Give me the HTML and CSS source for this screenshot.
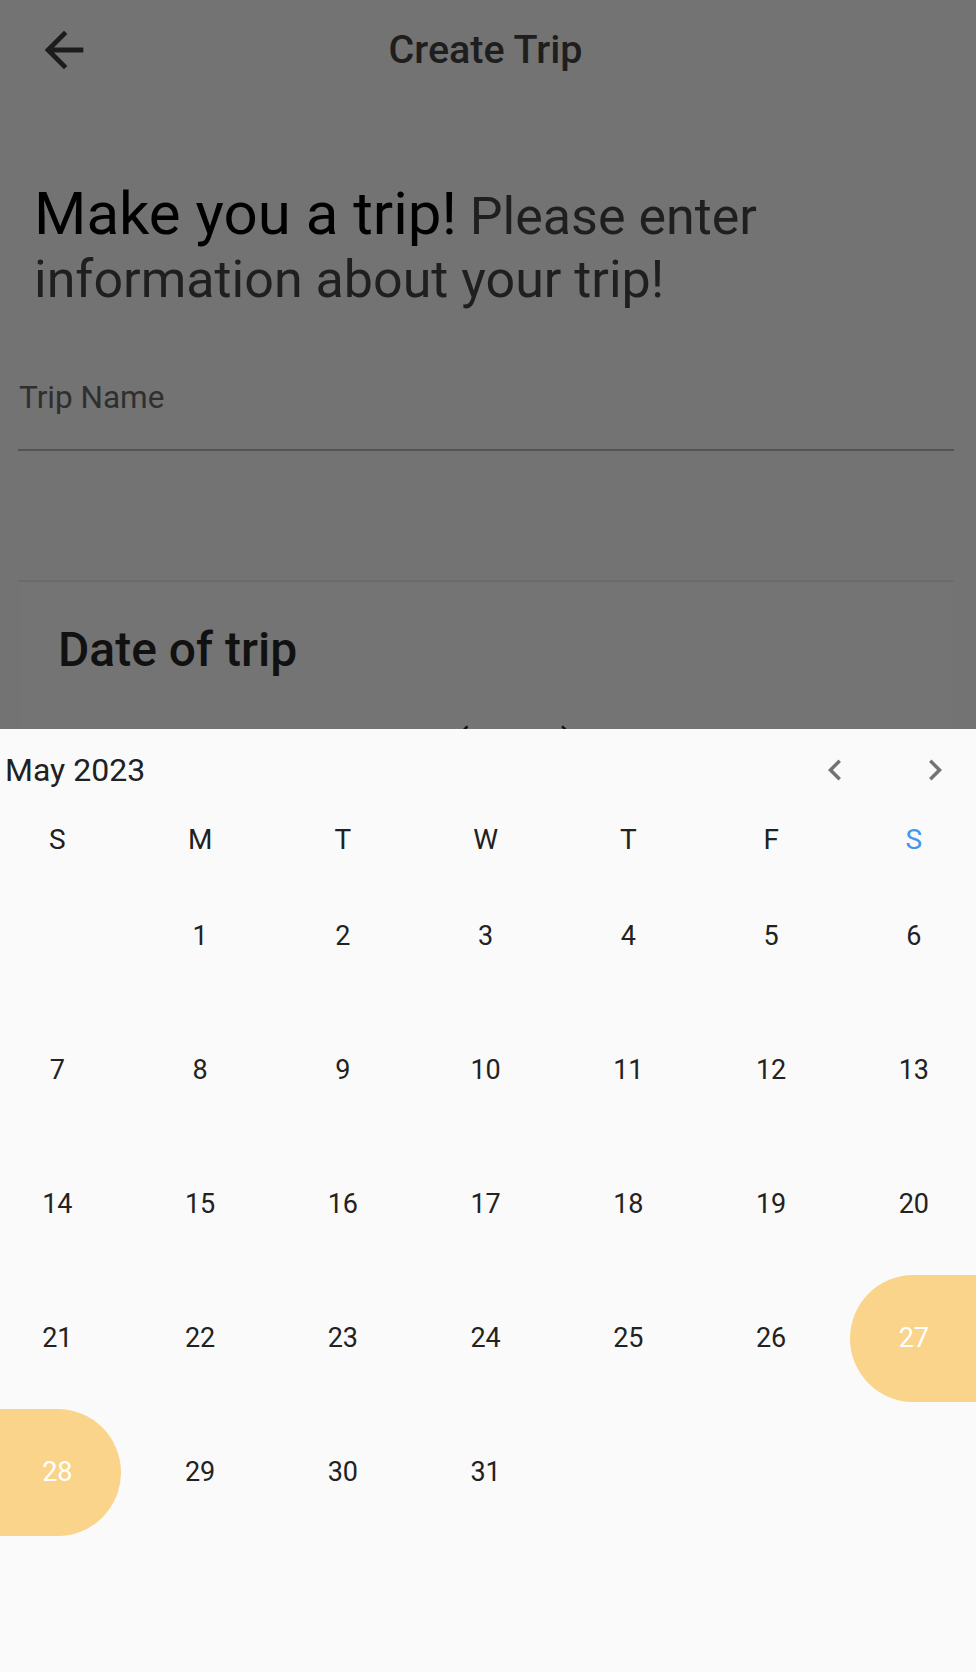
FILE: index.html
```html
<!DOCTYPE html>
<html lang="en">
<head>
<meta charset="utf-8">
<title>Create Trip</title>
<link rel="stylesheet" href="styles.css">
</head>
<body>
<div class="page">
  <header class="appbar">
    <button class="back-btn" aria-label="Back">
      <svg class="back-icon" viewBox="0 0 24 24"><path d="M20 11H7.83l5.59-5.59L12 4l-8 8 8 8 1.41-1.41L7.83 13H20v-2z"/></svg>
    </button>
    <h1 class="title">Create Trip</h1>
    <span class="appbar-spacer"></span>
  </header>

  <p class="intro"><span class="intro-lead">Make you a trip!</span> Please enter information about your trip!</p>

  <div class="field">
    <div class="field-label">Trip Name</div>
  </div>

  <section class="card">
    <h2 class="card-title">Date of trip</h2>
    <div class="date-range"><span class="paren">(</span><span class="paren">)</span></div>
  </section>
</div>

<div class="sheet">
  <div class="cal-header">
    <span class="cal-month">May 2023</span>
    <div class="cal-nav">
      <button class="nav-btn" aria-label="Previous month">
        <svg class="nav-icon" viewBox="0 0 24 24"><path d="M15.41 7.41L14 6l-6 6 6 6 1.41-1.41L10.83 12z"/></svg>
      </button>
      <button class="nav-btn" aria-label="Next month">
        <svg class="nav-icon" viewBox="0 0 24 24"><path d="M10 6L8.59 7.41 13.17 12l-4.58 4.59L10 18l6-6z"/></svg>
      </button>
    </div>
  </div>

  <div class="weekdays">
    <span class="wd">S</span><span class="wd">M</span><span class="wd">T</span><span class="wd">W</span><span class="wd">T</span><span class="wd">F</span><span class="wd wd-sat">S</span>
  </div>

  <div class="days">
    <div class="day"></div>
    <div class="day"><span class="num">1</span></div>
    <div class="day"><span class="num">2</span></div>
    <div class="day"><span class="num">3</span></div>
    <div class="day"><span class="num">4</span></div>
    <div class="day"><span class="num">5</span></div>
    <div class="day"><span class="num">6</span></div>

    <div class="day"><span class="num">7</span></div>
    <div class="day"><span class="num">8</span></div>
    <div class="day"><span class="num">9</span></div>
    <div class="day"><span class="num">10</span></div>
    <div class="day"><span class="num">11</span></div>
    <div class="day"><span class="num">12</span></div>
    <div class="day"><span class="num">13</span></div>

    <div class="day"><span class="num">14</span></div>
    <div class="day"><span class="num">15</span></div>
    <div class="day"><span class="num">16</span></div>
    <div class="day"><span class="num">17</span></div>
    <div class="day"><span class="num">18</span></div>
    <div class="day"><span class="num">19</span></div>
    <div class="day"><span class="num">20</span></div>

    <div class="day"><span class="num">21</span></div>
    <div class="day"><span class="num">22</span></div>
    <div class="day"><span class="num">23</span></div>
    <div class="day"><span class="num">24</span></div>
    <div class="day"><span class="num">25</span></div>
    <div class="day"><span class="num">26</span></div>
    <div class="day day-sel day-start"><span class="num">27</span></div>

    <div class="day day-sel day-end"><span class="num">28</span></div>
    <div class="day"><span class="num">29</span></div>
    <div class="day"><span class="num">30</span></div>
    <div class="day"><span class="num">31</span></div>
  </div>
</div>
</body>
</html>
```

FILE: styles.css
```css
html, body {
  margin: 0;
  padding: 0;
}

body {
  background: #737373;
  font-family: Roboto, "Noto Sans", "Liberation Sans", sans-serif;
  height: 1672px;
  overflow: hidden;
}

.page {
  display: flex;
  flex-direction: column;
}

/* App bar */
.appbar {
  height: 100px;
  display: grid;
  grid-template-columns: 1fr auto 1fr;
  align-items: center;
}

.back-btn {
  margin-left: 35px;
  width: 58px;
  height: 58px;
  padding: 0;
  border: 0;
  background: none;
  display: flex;
  align-items: center;
  justify-content: center;
}

.back-icon {
  width: 58px;
  height: 58px;
  fill: #1c1c1c;
}

.title {
  margin: 0;
  font-size: 39.5px;
  line-height: 48px;
  font-weight: 500;
  color: #1e1e1e;
  padding-right: 5px;
}

/* Intro */
.intro {
  margin: 84px 34px 0;
  font-size: 52px;
  line-height: 63px;
  color: #1f1f1f;
}

.intro-lead {
  font-size: 60px;
  line-height: 60px;
  color: #000;
}

/* Trip name field */
.field {
  margin: 67px 22px 0 18px;
  padding: 0 0 31px 1px;
  border-bottom: 2px solid #545454;
}

.field-label {
  font-size: 31.5px;
  line-height: 40px;
  color: #2f2f2f;
}

/* Card */
.card {
  margin: 129px 22px 0 18px;
  border-top: 2px solid #6b6b6b;
  border-left: 1px solid #717171;
  border-right: 1px solid #717171;
  background: #747474;
  padding: 40px 0 0 39px;
  height: 1200px;
}

.card-title {
  margin: 0;
  font-size: 48px;
  line-height: 56px;
  font-weight: 500;
  color: #111;
}

.date-range {
  margin: 43px 0 0 397px;
  display: flex;
  gap: 92px;
  font-size: 40px;
  line-height: 48px;
  color: #111;
}

/* Calendar bottom sheet */
.sheet {
  position: fixed;
  left: 0;
  right: 0;
  top: 729px;
  bottom: 0;
  background: #fafafa;
  overflow: hidden;
}

.cal-header {
  height: 81px;
  display: flex;
  align-items: center;
  padding: 0 12px 0 5px;
}

.cal-month {
  font-size: 32px;
  color: #212121;
}

.cal-nav {
  margin-left: auto;
  display: flex;
  gap: 42px;
}

.nav-btn {
  width: 58px;
  height: 58px;
  padding: 0;
  border: 0;
  background: none;
  display: flex;
  align-items: center;
  justify-content: center;
}

.nav-icon {
  width: 42px;
  height: 42px;
  fill: #737373;
}

.weekdays,
.days {
  display: grid;
  grid-template-columns: repeat(7, 142.75px);
  margin-left: -14px;
  width: 999.25px;
}

.weekdays {
  height: 59px;
  align-items: center;
  justify-items: center;
  font-size: 28px;
  color: #212121;
}

.wd-sat {
  color: #4196f0;
}

.days {
  grid-auto-rows: 134px;
}

.day {
  position: relative;
  display: flex;
  align-items: center;
  justify-content: center;
  font-size: 27px;
  color: #222;
}

.num {
  position: relative;
  z-index: 1;
}

.day-sel {
  color: #fff;
}

.day-sel::before {
  content: "";
  position: absolute;
  top: 3.5px;
  left: 50%;
  width: 127px;
  height: 127px;
  margin-left: -63.5px;
  border-radius: 50%;
  background: #f9d48a;
}

.day-start::after {
  content: "";
  position: absolute;
  top: 3.5px;
  height: 127px;
  left: 50%;
  right: 0;
  background: #f9d48a;
}

.day-end::after {
  content: "";
  position: absolute;
  top: 3.5px;
  height: 127px;
  left: 0;
  right: 50%;
  background: #f9d48a;
}
```
